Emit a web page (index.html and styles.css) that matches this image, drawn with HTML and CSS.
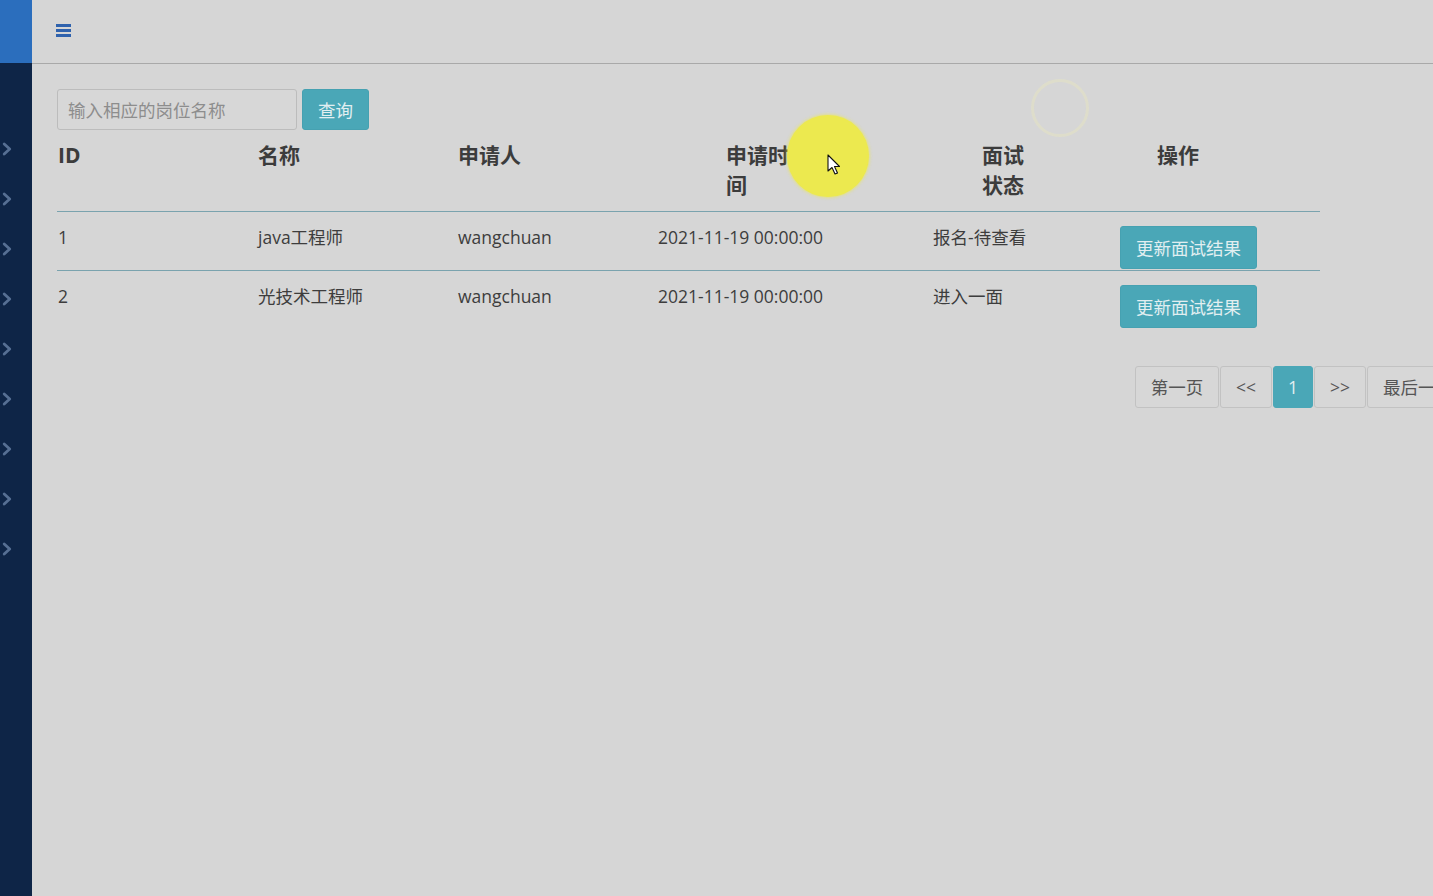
FILE: index.html
```html
<!DOCTYPE html>
<html lang="zh">
<head>
<meta charset="utf-8">
<title>面试管理</title>
<link rel="stylesheet" href="styles.css">
</head>
<body>
<div class="app">
  <aside class="sidebar">
    <div class="brand"></div>
    <ul class="nav">
      <li><svg viewBox="0 0 10 12" class="chev"><polyline points="2,1.5 7,6 2,10.5"/></svg></li>
      <li><svg viewBox="0 0 10 12" class="chev"><polyline points="2,1.5 7,6 2,10.5"/></svg></li>
      <li><svg viewBox="0 0 10 12" class="chev"><polyline points="2,1.5 7,6 2,10.5"/></svg></li>
      <li><svg viewBox="0 0 10 12" class="chev"><polyline points="2,1.5 7,6 2,10.5"/></svg></li>
      <li><svg viewBox="0 0 10 12" class="chev"><polyline points="2,1.5 7,6 2,10.5"/></svg></li>
      <li><svg viewBox="0 0 10 12" class="chev"><polyline points="2,1.5 7,6 2,10.5"/></svg></li>
      <li><svg viewBox="0 0 10 12" class="chev"><polyline points="2,1.5 7,6 2,10.5"/></svg></li>
      <li><svg viewBox="0 0 10 12" class="chev"><polyline points="2,1.5 7,6 2,10.5"/></svg></li>
      <li><svg viewBox="0 0 10 12" class="chev"><polyline points="2,1.5 7,6 2,10.5"/></svg></li>
    </ul>
  </aside>
  <main class="main">
    <header class="topbar">
      <span class="burger"><i></i><i></i><i></i></span>
    </header>
    <section class="content">
      <div class="search">
        <input class="search-input" type="text" placeholder="输入相应的岗位名称">
        <button class="btn">查询</button>
      </div>
      <div class="table">
        <div class="th">ID</div>
        <div class="th">名称</div>
        <div class="th">申请人</div>
        <div class="th th-time"><span>申请时间</span></div>
        <div class="th th-status"><span>面试状态</span></div>
        <div class="th th-op">操作</div>

        <div class="td">1</div>
        <div class="td">java工程师</div>
        <div class="td">wangchuan</div>
        <div class="td">2021-11-19 00:00:00</div>
        <div class="td">报名-待查看</div>
        <div class="td td-op"><button class="btn">更新面试结果</button></div>

        <div class="td last">2</div>
        <div class="td last">光技术工程师</div>
        <div class="td last">wangchuan</div>
        <div class="td last">2021-11-19 00:00:00</div>
        <div class="td last">进入一面</div>
        <div class="td td-op last"><button class="btn">更新面试结果</button></div>
      </div>
      <nav class="pager">
        <span class="page page-first">第一页</span>
        <span class="page page-arrow">&lt;&lt;</span>
        <span class="page active">1</span>
        <span class="page page-arrow">&gt;&gt;</span>
        <span class="page page-last">最后一页</span>
      </nav>
    </section>
  </main>
</div>
<div class="spot"></div>
<div class="ring"></div>
<svg class="cursor" viewBox="0 0 14 22" width="14" height="22"><path d="M1 1 L1 17 L5 13.5 L8 20 L10.5 19 L7.5 12.5 L12.5 12.5 Z" fill="#fff" stroke="#111" stroke-width="1.1" stroke-linejoin="round"/></svg>
</body>
</html>
```

FILE: styles.css
```css
* { box-sizing: border-box; }
html, body {
  margin: 0;
  height: 100%;
  overflow: hidden;
  background: #d6d6d6;
  font-family: "Open Sans", "Noto Sans CJK SC", sans-serif;
  color: #3b3b3b;
}
.app {
  display: flex;
  height: 896px;
  width: 1433px;
}
.sidebar {
  width: 32px;
  flex: none;
  background: #0e2547;
  display: flex;
  flex-direction: column;
}
.brand {
  height: 63px;
  background: #2b6ebd;
}
.nav {
  list-style: none;
  margin: 0;
  padding: 78px 0 0 2px;
  display: flex;
  flex-direction: column;
  gap: 34px;
}
.nav li { height: 16px; display: flex; align-items: center; }
.chev {
  width: 11px;
  height: 14px;
  fill: none;
  stroke: #566f93;
  stroke-width: 2.6;
  stroke-linecap: round;
  stroke-linejoin: round;
}
.main {
  flex: 1;
  min-width: 0;
  display: flex;
  flex-direction: column;
}
.topbar {
  height: 64px;
  border-bottom: 1px solid #a9a9a9;
  display: flex;
  align-items: center;
  padding-left: 24px;
}
.burger {
  display: flex;
  flex-direction: column;
  gap: 2px;
  margin-top: -2px;
}
.burger i {
  display: block;
  width: 15px;
  height: 3px;
  background: #2f62ad;
}
.content {
  padding: 25px 0 0 25px;
}
.search {
  display: flex;
  gap: 5px;
  height: 41px;
}
.search-input {
  width: 240px;
  height: 41px;
  border: 1px solid #bcbcbc;
  border-radius: 3px;
  background: #d7d7d7;
  padding: 0 10px;
  font-family: "Open Sans", "Noto Sans CJK SC", sans-serif;
  font-size: 17.5px;
  color: #555;
}
.search-input::placeholder { color: #8d8d8d; }
.btn {
  background: #4aa7b7;
  border: 1px solid #46a1b1;
  border-radius: 3px;
  color: #e2eff1;
  font-family: "Open Sans", "Noto Sans CJK SC", sans-serif;
  font-size: 17.5px;
  padding: 0 15px;
  height: 41px;
}
.table {
  display: grid;
  grid-template-columns: 200px 200px 200px 275px 188px 200px;
  width: 1263px;
}
.th {
  font-weight: bold;
  font-size: 21px;
  line-height: 30px;
  padding: 10px 0 11px 1px;
  color: #3c3c3c;
  border-bottom: 1px solid #7aa3ae;
}
.th-time { padding-left: 69px; }
.th-time span { display: block; width: 68px; }
.th-status { padding-left: 50px; }
.th-status span { display: block; width: 46px; }
.th-op { padding-left: 37px; }
.td {
  font-size: 17.5px;
  line-height: 22px;
  padding: 14px 0 0 1px;
  height: 59px;
  border-bottom: 1px solid #7aa3ae;
  color: #3d3d3d;
}
.td.last { border-bottom: none; }
.td-op { padding: 14px 0 0 0; }
.td-op .btn { height: 43px; }
.pager {
  display: flex;
  margin: 36px 0 0 1078px;
  gap: 1px;
  white-space: nowrap;
}
.page {
  flex: none;
  height: 42px;
  line-height: 40px;
  border: 1px solid #c2c2c2;
  border-radius: 3px;
  text-align: center;
  font-size: 17.5px;
  color: #555;
  background: #d7d7d7;
}
.page-first { width: 84px; }
.page-arrow { width: 52px; }
.page-last { padding: 0 15px; }
.page.active {
  width: 40px;
  background: #4aa7b7;
  border-color: #4aa7b7;
  color: #e2eff1;
}
.spot {
  position: absolute;
  left: 787px;
  top: 115px;
  width: 82px;
  height: 82px;
  border-radius: 50%;
  background: #ece94f;
  box-shadow: 0 0 3px 1px rgba(236, 233, 79, 0.6);
}
.ring {
  position: absolute;
  left: 1031px;
  top: 79px;
  width: 58px;
  height: 58px;
  border-radius: 50%;
  border: 3px solid rgba(232, 230, 190, 0.45);
}
.cursor {
  position: absolute;
  left: 827px;
  top: 154px;
}
```
